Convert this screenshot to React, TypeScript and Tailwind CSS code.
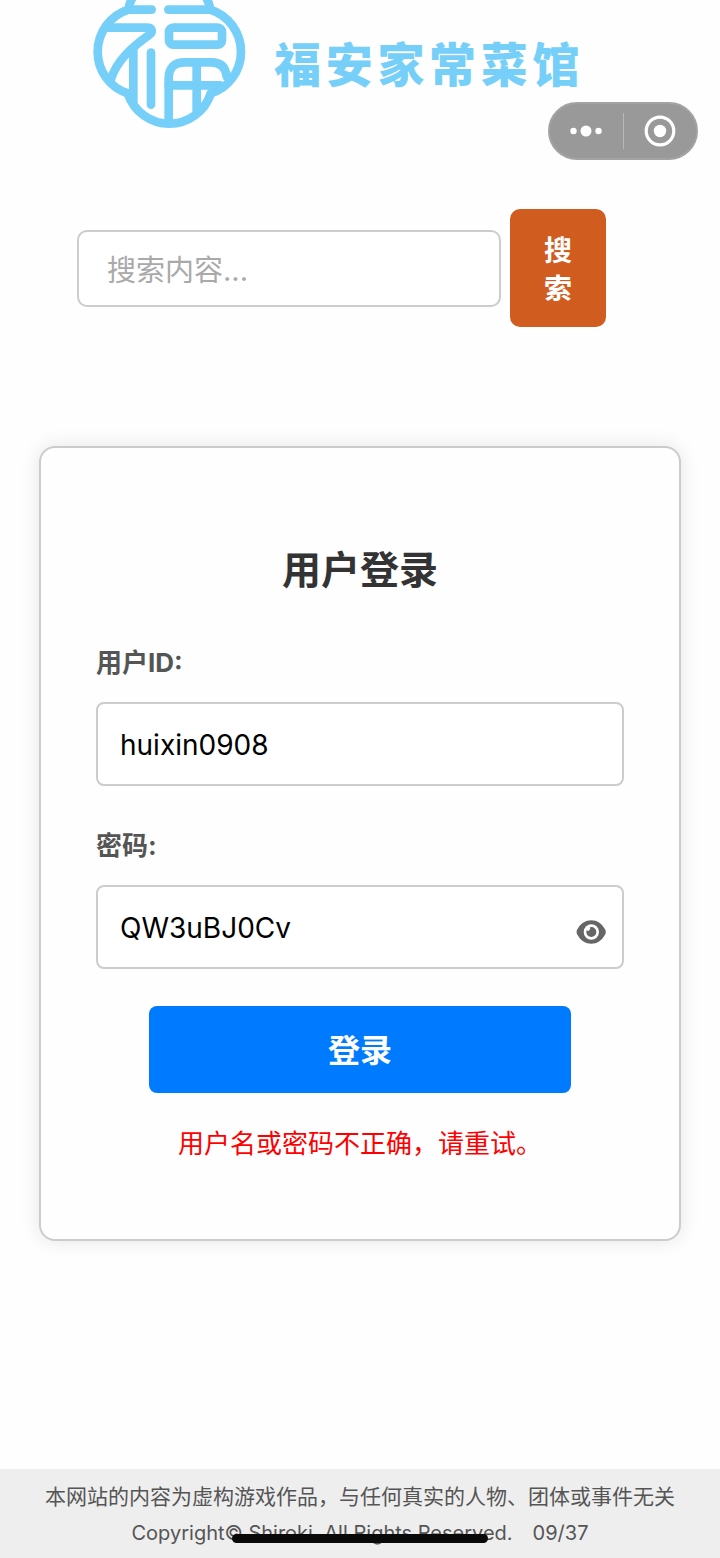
import { useState } from "react";

function LogoMark() {
  return (
    <svg viewBox="0 0 540 420" className="w-[180px] h-[140px] shrink-0" fill="none" stroke="#76cff9" strokeWidth="26" strokeLinecap="round" strokeLinejoin="round" aria-hidden="true">
      <path d="M144 282A131 131 0 0 0 392 282" />
      <path d="M145 29C92 46 53 96 53 155S92 265 144 280" />
      <path d="M391 29C444 46 483 96 483 155S444 265 392 280" />
      <path d="M145 29Q148 8 160 -12M391 29Q388 8 376 -12" strokeLinecap="butt" />
      <path d="M145 29H215M265 29H391" />
      <path d="M78 83H200C217 83 220 95 208 104C158 140 110 180 92 240" />
      <path d="M160 145V305" />
      <path d="M213 158V314" />
      <rect x="267" y="83" width="159" height="51" rx="13" />
      <path d="M266 368V236Q266 187 314 187H394Q436 187 440 230" />
      <path d="M266 256H420" />
      <path d="M350 190V336" />
    </svg>
  );
}

function EyeIcon() {
  return (
    <svg viewBox="0 0 90 72" className="h-6 w-[30px]" aria-hidden="true">
      <path d="M2 36Q1 32 4 28C14 10 29 1 46 1S77 10 87 28Q90 32 89 36Q90 40 87 44C77 62 63 71 46 71S14 62 4 44Q1 40 2 36Z" fill="#666" />
      <circle cx="46" cy="36" r="23" fill="#fff" />
      <path d="M46 21A15 15 0 1 1 31 36Q31 33 32 31Q36 34 40 31T42 22Q44 21 46 21Z" fill="#666" />
    </svg>
  );
}

export default function App() {
  const [userId, setUserId] = useState("huixin0908");
  const [password, setPassword] = useState("QW3uBJ0Cv");
  const [shown, setShown] = useState(true);

  return (
    <div className="relative flex min-h-screen flex-col bg-[#fefefe] font-['Inter','Noto_Sans_CJK_SC',sans-serif]">
      <header className="flex h-[140px] items-start pl-20">
        <LogoMark />
        <h1 className="mt-[31px] ml-3.5 whitespace-nowrap text-[47px] leading-[68px] font-black tracking-widest text-[#76cff9]">福安家常菜馆</h1>
      </header>

      <div className="absolute top-[102px] right-[22px] flex h-[58px] w-[150px] items-center rounded-full border-2 border-[#a3a3a3] bg-[#999]">
        <button type="button" aria-label="更多" className="flex flex-1 items-center justify-center">
          <svg viewBox="0 0 32 12" className="h-3 w-8" fill="#fff" aria-hidden="true">
            <circle cx="3.5" cy="6" r="3.2" />
            <circle cx="16" cy="6" r="5.5" />
            <circle cx="28.5" cy="6" r="3.2" />
          </svg>
        </button>
        <span className="h-9 w-px bg-[#b8b8b8]" />
        <button type="button" aria-label="关闭" className="flex flex-1 items-center justify-center">
          <svg viewBox="0 0 32 32" className="size-8" aria-hidden="true">
            <circle cx="16" cy="16" r="13.8" fill="none" stroke="#fff" strokeWidth="3.2" />
            <circle cx="16" cy="16" r="6.2" fill="#fff" />
          </svg>
        </button>
      </div>

      <form className="mt-[69px] mr-[114px] ml-[77px] flex items-center gap-[9px]" onSubmit={(e) => e.preventDefault()}>
        <input
          type="search"
          aria-label="搜索内容"
          placeholder="搜索内容..."
          className="h-[77px] min-w-0 flex-1 rounded-[10px] border-2 border-[#ccc] bg-white px-7 pt-1 text-[29px] outline-none placeholder:text-[#a9a9a9]"
        />
        <button type="submit" className="w-24 rounded-[10px] bg-[#d05c20] px-8 pt-[23px] pb-[19px] text-[28px] leading-[38px] font-bold text-white">
          搜索
        </button>
      </form>

      <main className="mx-[39px] mt-[119px] rounded-2xl border-2 border-[#ccc] bg-[#fefefe] px-[55px] pt-[94px] pb-[76px] shadow-[0_0_20px_rgba(0,0,0,0.1)]">
        <form onSubmit={(e) => e.preventDefault()}>
          <h2 className="text-center text-[39px] leading-[56px] font-bold text-[#333]">用户登录</h2>
          <label htmlFor="user" className="mt-[46px] block text-[26px] leading-[38px] font-bold text-[#555]">用户ID:</label>
          <input
            id="user"
            type="text"
            value={userId}
            onChange={(e) => setUserId(e.target.value)}
            className="mt-5 block h-[84px] w-full rounded-lg border-2 border-[#ccc] bg-white px-[22px] pt-0.5 text-[28px] text-black outline-none"
          />
          <label htmlFor="pass" className="mt-[41px] block text-[26px] leading-[38px] font-bold text-[#555]">密码:</label>
          <div className="relative mt-5">
            <input
              id="pass"
              type={shown ? "text" : "password"}
              value={password}
              onChange={(e) => setPassword(e.target.value)}
              className="block h-[84px] w-full rounded-lg border-2 border-[#ccc] bg-white pt-0.5 pr-16 pl-[22px] text-[28px] text-black outline-none"
            />
            <button type="button" aria-label="显示密码" onClick={() => setShown(!shown)} className="absolute top-[35px] right-[18px]">
              <EyeIcon />
            </button>
          </div>
          <button type="submit" className="mx-auto mt-[37px] block h-[87px] w-4/5 rounded-lg bg-[#007bff] pt-0.5 text-[32px] font-bold text-white">
            登录
          </button>
          <p role="alert" className="mt-8 text-center text-[26px] leading-[38px] text-[#f00]">用户名或密码不正确，请重试。</p>
        </form>
      </main>

      <footer className="mt-auto bg-[#eee] pt-[9px] pb-[6px] text-center text-[#555]">
        <p className="whitespace-nowrap text-[21px] leading-[37px]">本网站的内容为虚构游戏作品，与任何真实的人物、团体或事件无关</p>
        <p className="text-[20px] leading-[37px]">Copyright© Shiroki. All Rights Reserved.&emsp;09/37</p>
      </footer>
      <div className="absolute bottom-[15px] left-1/2 h-[9px] w-64 -translate-x-1/2 rounded-full bg-[#0a0a0a]" />
    </div>
  );
}
